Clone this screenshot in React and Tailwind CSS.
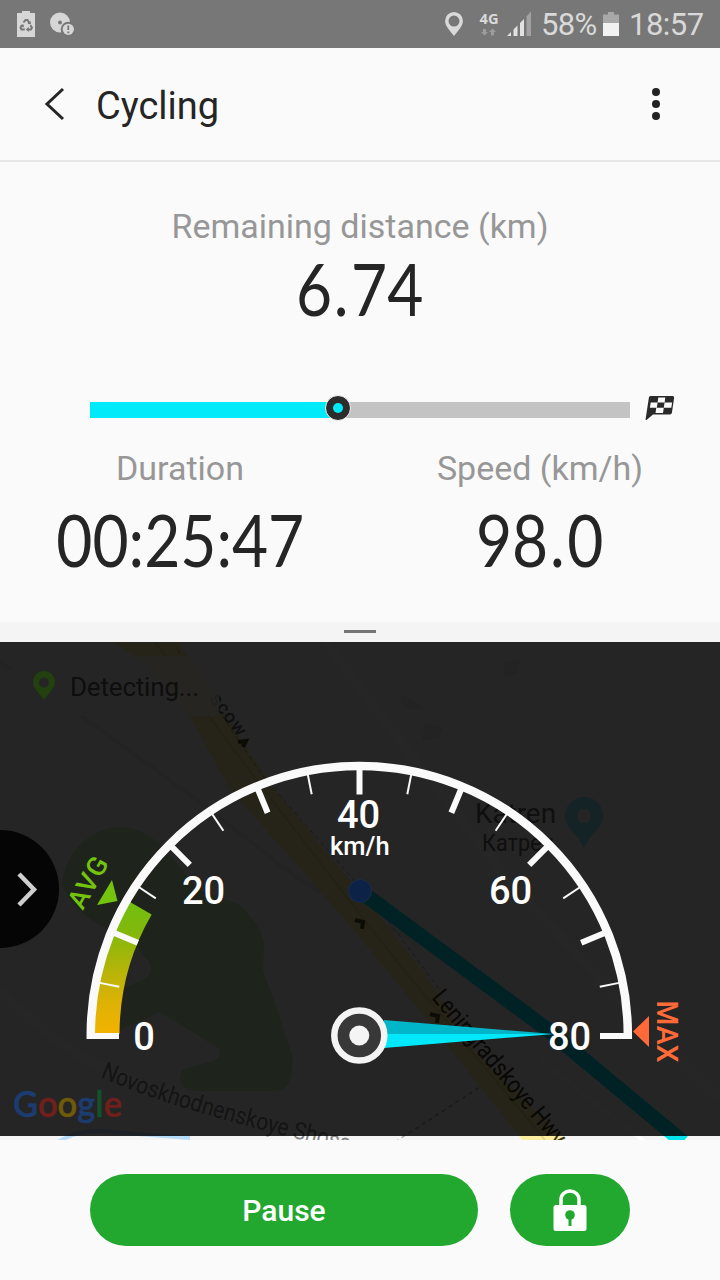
const CX = 359.5;
const CY = 1034.5;

const labels = [
  { value: "0", x: 144, y: 1050 },
  { value: "20", x: 203.5, y: 903.5 },
  { value: "40", x: 358.5, y: 828 },
  { value: "60", x: 510.5, y: 903.5 },
  { value: "80", x: 569.5, y: 1050 },
];

function polar(r, deg) {
  const a = (deg * Math.PI) / 180;
  return [CX - r * Math.cos(a), CY - r * Math.sin(a)];
}

function StatusBar() {
  return (
    <div className="flex h-12 items-center bg-[#777777] text-[#d9d9d9]">
      <svg className="ml-4 h-12 w-16 shrink-0" viewBox="16 0 64 48" fill="none">
        <path d="M17 13h5v-2h8v2h5v24H17z" fill="#d6d6d6" />
        <g stroke="#777" strokeWidth="2">
          <path d="M23.5 22.5 25.5 20h2l1.7 2.8M30.5 25.3l1.4 2.4-1 1.8h-3.2M24.8 29.5h-3.3l-.9-1.8 1.5-2.6" />
        </g>
        <path d="m27.5 24 3.6.2-.8-3.5zM28.8 27v5l-3-2.5zM20 25.5l3.5-1.3.7 3.3z" fill="#777" />
        <circle cx="60" cy="22.5" r="10" fill="#d6d6d6" />
        <circle cx="60" cy="22.5" r="2" fill="#777" />
        <circle cx="68.3" cy="29.3" r="7.6" fill="#777" />
        <circle cx="68.3" cy="29.3" r="5.6" fill="#d6d6d6" />
        <path d="M68.3 25.5v4.5M68.3 31.4v1.8" stroke="#777" strokeWidth="1.8" />
      </svg>
      <svg className="ml-auto h-12 w-[96px] shrink-0" viewBox="440 0 96 48">
        <path fillRule="evenodd" d="M454 12a8.9 8.9 0 0 1 8.9 8.9c0 5.2-5.4 10.3-8.9 15-3.5-4.7-8.9-9.8-8.9-15A8.9 8.9 0 0 1 454 12zm0 3.6a5.5 5.5 0 1 0 0 11 5.5 5.5 0 0 0 0-11z" fill="#d9d9d9" />
        <text x="479.5" y="24" textLength="19" lengthAdjust="spacingAndGlyphs" fontFamily="Noto Sans, sans-serif" fontWeight="700" fontSize="15" fill="#d9d9d9">4G</text>
        <path d="M483 29h3v3h2l-3.5 3.5-3.5-3.5h2zM491 35.5v-3.5h-2l3.5-3.5 3.5 3.5h-2v3.5z" fill="#9c9c9c" />
        <path d="M507 36l4-4v4zM513.5 29.5l4-4V36h-4zM520 23l4-4v17h-4z" fill="#e2e2e2" />
        <path d="M526.5 16.5l4.5-5V36h-4.5z" fill="#a2a2a2" />
      </svg>
      <span className="ml-[5px] w-[62px] shrink-0 pt-[2px] text-[31px] tracking-[-0.7px]">58%</span>
      <svg className="h-12 w-[16px] shrink-0" viewBox="603 0 16 48">
        <path d="M603 14.5h5V12h6v2.5h5V23h-16z" fill="#a8a8a8" />
        <path d="M603 23h16v13h-16z" fill="#f2f2f2" />
      </svg>
      <span className="ml-[10px] w-[91px] shrink-0 pt-[2px] text-[31px] tracking-[-0.5px]">18:57</span>
    </div>
  );
}

function Header() {
  return (
    <header className="flex h-[114px] items-center border-b-2 border-[#e6e6e6]">
      <svg className="ml-[42px] h-9 w-6" viewBox="0 0 24 36" fill="none">
        <path d="M21 3 5 18 21 33" stroke="#252525" strokeWidth="3" />
      </svg>
      <h1 className="ml-[30px] pt-[5px] text-[38px] text-[#252525]">Cycling</h1>
      <div className="mr-[60px] ml-auto flex flex-col gap-1">
        <i className="size-2 rounded-full bg-[#222]" />
        <i className="size-2 rounded-full bg-[#222]" />
        <i className="size-2 rounded-full bg-[#222]" />
      </div>
    </header>
  );
}

function Metric({ label, value, className }) {
  const [whole, fraction] = value.split(".");
  return (
    <div className={`flex flex-col items-center ${className}`}>
      <span className="text-[34px] leading-10 whitespace-nowrap text-[#979797]">{label}</span>
      <span className="scale-x-[0.865] font-['Lato',sans-serif] text-[72px] leading-[72px] whitespace-nowrap text-[#252525]">
        {whole}
        {fraction && <span className="pr-[3px] pl-[2px]">.</span>}
        {fraction}
      </span>
    </div>
  );
}

function Progress() {
  return (
    <div className="flex h-8 items-center pl-[90px]">
      <div className="relative h-4 w-[540px] bg-[#c3c3c3]">
        <div className="h-full bg-[#00eaf9]" style={{ width: `${(248 / 540) * 100}%` }} />
        <div className="absolute top-[-7px] left-[235px] grid size-[26px] place-items-center rounded-full border border-[#f5f5f5] bg-[#2c2c2c]">
          <div className="size-[10px] rounded-full bg-[#00eaf9]" />
        </div>
      </div>
      <svg className="mb-1 ml-[15px] h-7 w-8" viewBox="645 394 32 28">
        <path d="M650.5 396h22q2 0 1.600 2l-2.200 14.800q-.3 1.800-2 1.800H653l-6.500 5.400q-1 .3-.9-.8L648.900 397.500q.3-1.500 1.600-1.500z" fill="#2a2a2a" />
        <path d="M658.3 397.500h7l-.7 5.100h-7zM650.700 402.600h6.900l-.8 5.200h-6.900zM664.600 402.600h7.500l-.8 5.200h-7.500zM656.300 407.800h7.500l-.8 5.200h-7.500z" fill="#fafafa" />
      </svg>
    </div>
  );
}

function Ticks() {
  return Array.from({ length: 15 }, (_, i) => {
    const n = i + 1;
    const major = n % 2 === 0;
    const [x1, y1] = polar(266, n * 11.25);
    const [x2, y2] = polar(major ? 240 : 245, n * 11.25);
    return <line key={n} x1={x1} y1={y1} x2={x2} y2={y2} stroke="#fafafa" strokeWidth={major ? 6 : 2} />;
  });
}

function MapLayer() {
  return (
    <g>
      <rect y="642" width="720" height="498" fill="#f5f5f5" />
      <g fill="none" stroke="#fff" strokeWidth="9">
        <path d="M-10 655 L90 722 L190 795 L300 880 L420 945" strokeWidth="4" stroke="#e6e6e6" />
        <path d="M325 642 L415 760 L500 870 L600 980 L720 1100" />
        <path d="M0 990 Q60 1050 105 1068 Q200 1110 340 1145" />
        <path d="M540 1060 L645 1142" strokeWidth="4" />
      </g>
      <path d="M62 885 C65 850 92 827 122 827 C160 830 175 865 200 890 L240 905 L258 925 L264 942 L263 970 L278 1012 L292 1055 Q294 1072 288 1084 Q284 1091 272 1091 L195 1091 Q180 1089 180 1078 L182 1070 L215 1060 Q224 1054 218 1048 L160 1012 L120 1030 L124 988 L146 978 Q155 970 148 960 L132 943 L100 925 Q72 910 62 885z" fill="#cbecb8" />
      <path d="M113 642 H177 L197 667 L217 703 L275 790 L333 860 L395 935 L427 977 L473 1050 L565 1140 H522 L423 1015 L355 932 L325 897 L293 860 L230 790 L192 720 L150 667z" fill="#fdefa0" />
      <path d="M155 642 L230 745 L345 895 L400 965 L545 1140" fill="none" stroke="#e8d684" strokeWidth="2" />
      <path d="M178 650 L262 775 L380 910 L440 990" fill="none" stroke="#b5a85f" strokeWidth="1" strokeDasharray="4 4" />
      <path d="M395 1142 L480 1087" fill="none" stroke="#aaa" strokeWidth="1.5" strokeDasharray="4 4" />
      <path d="M55 1144 Q75 1130 100 1131 L190 1138" fill="none" stroke="#b5dcfb" strokeWidth="4" />
      <path d="M360 891 L548 1030 L683 1142" fill="none" stroke="#00e5ee" strokeWidth="15" />
      <path d="M402 695l12 5 8 8-10 2-12-7zM425 722l18 6-4 10-18 3zM503 662l18-2-4 14-12 2z" fill="#e6e6e6" />
      <g fontFamily="Roboto, sans-serif" fill="#686868">
        <text fontSize="19" fontWeight="500" transform="translate(209 699) rotate(53)" textLength="48">scow</text>
        <rect x="12" y="656" width="207" height="60" rx="2" fill="#fafafa" fillOpacity=".75" />
        <text x="70" y="696" fontSize="26" fill="#5c5c5c" textLength="129">Detecting...</text>
        <text x="475" y="823" fontSize="28" textLength="81" lengthAdjust="spacingAndGlyphs">Katren</text>
        <text x="482" y="851" fontSize="24" textLength="72" lengthAdjust="spacingAndGlyphs">Катрен</text>
        <text fontSize="24.5" fill="#3c3414" transform="translate(431 998) rotate(50)" textLength="194" lengthAdjust="spacingAndGlyphs">Leningradskoye Hwy</text>
        <text fontSize="24" fill="#858585">
          <textPath href="#shosse" textLength="271" lengthAdjust="spacingAndGlyphs">Novoskhodnenskoye Shosse</textPath>
        </text>
      </g>
      <path d="M238 742l8-1-3 6M355 920l8 2-1 7M430 1014l8 2-1 7" fill="none" stroke="#55502a" strokeWidth="4" />
    </g>
  );
}

function Gauge() {
  const [ox, oy] = polar(265.5, 30);
  const [ix, iy] = polar(240, 30);
  return (
    <g>
      <path d={`M${CX - 265.5} 1034 A265.5 265.5 0 0 1 ${ox} ${oy} L${ix} ${iy} A240 240 0 0 0 ${CX - 240} 1034z`} fill="url(#avg)" />
      <path d="M90.8 1039 V1034.5 A268.5 268.5 0 0 1 627.8 1034.5 V1039" fill="none" stroke="#fafafa" strokeWidth="8.5" />
      <path d="M90 1036H119M600 1036H631" stroke="#fafafa" strokeWidth="6" />
      <Ticks />
      <path d="M384 1020 L554 1034 H384z" fill="#00b6c8" />
      <path d="M384 1034 H554 L384 1048z" fill="#00e8fa" />
      <circle cx="359.3" cy="1035.5" r="25" fill="#383838" stroke="#f4f4f4" strokeWidth="6.5" />
      <circle cx="359.3" cy="1035.5" r="10" fill="#f4f4f4" />
      <g fontFamily="Roboto, sans-serif" fontWeight="500" fill="#fff" textAnchor="middle">
        {labels.map((l) => (
          <text key={l.value} x={l.x} y={l.y} fontSize="38">{l.value}</text>
        ))}
        <text x="359.8" y="854.5" fontSize="25.5">km/h</text>
        <text fontSize="27" fill="#74c40f" transform="translate(96 887) rotate(-61)" textLength="55">AVG</text>
        <text fontSize="30" fill="#ff6a38" transform="translate(657 1031.5) rotate(90)" textLength="62" lengthAdjust="spacingAndGlyphs">MAX</text>
      </g>
      <path d="M112 880 L117.5 901 L97 905z" fill="#74c40f" />
      <path d="M633 1031.5 L649 1016 V1047z" fill="#ff6a38" />
    </g>
  );
}

function MapPanel() {
  return (
    <svg className="block h-[498px] w-[720px]" viewBox="0 642 720 498">
      <defs>
        <linearGradient id="avg" gradientUnits="userSpaceOnUse" x1="0" y1="1033" x2="0" y2="905">
          <stop offset="0" stopColor="#f2b200" />
          <stop offset=".25" stopColor="#dcb205" />
          <stop offset=".8" stopColor="#82b80c" />
          <stop offset="1" stopColor="#72be10" />
        </linearGradient>
        <path id="shosse" d="M100 1077 C160 1103 220 1121 400 1164" />
      </defs>
      <MapLayer />
      <rect y="642" width="720" height="494" fill="#000" fillOpacity=".85" />

      <path fillRule="evenodd" d="M44 671a11 11 0 0 1 11 11c0 6-7 12-11 18-4-6-11-12-11-18a11 11 0 0 1 11-11zm0 6.5a5 5 0 1 0 0 10 5 5 0 0 0 0-10z" fill="#23400f" />
      <path d="M584 797a19 19 0 0 1 19 19c0 13-14 17-19 33-5-16-19-20-19-33a19 19 0 0 1 19-19z" fill="#142325" />
      <circle cx="584" cy="816" r="7" fill="#252525" />
      <circle cx="360" cy="891" r="11.5" fill="#0d2247" stroke="#1d2c48" />
      <text x="13" y="1117" fontSize="36" fontWeight="600" fontFamily="Lato, sans-serif" textLength="109" lengthAdjust="spacingAndGlyphs" strokeWidth=".5">
        <tspan fill="#1c3c70" stroke="#1c3c70">G</tspan>
        <tspan fill="#6f201c" stroke="#6f201c">o</tspan>
        <tspan fill="#6f5a09" stroke="#6f5a09">o</tspan>
        <tspan fill="#1c3c70" stroke="#1c3c70">g</tspan>
        <tspan fill="#14502a" stroke="#14502a">l</tspan>
        <tspan fill="#6f201c" stroke="#6f201c">e</tspan>
      </text>

      <circle cx="0" cy="889" r="59" fill="#050505" />
      <path d="M19 874 L34 889.5 L19 905" fill="none" stroke="#cfcfcf" strokeWidth="4.5" />
      <Gauge />
    </svg>
  );
}

function Controls() {
  return (
    <div className="flex h-[140px] gap-8 px-[90px] pt-[34px]">
      <button className="h-[72px] w-[388px] rounded-full bg-[#22a82f] text-[30px] font-medium text-white">Pause</button>
      <button className="grid h-[72px] w-[120px] place-items-center rounded-full bg-[#22a82f]">
        <svg className="h-[42px] w-[34px]" viewBox="553 1189 34 42" fill="none">
          <path d="M561 1206v-6.5a9 8.5 0 0 1 18 0v6.5" stroke="#fff" strokeWidth="3.5" />
          <rect x="553.5" y="1205" width="33" height="26" rx="2.5" fill="#fff" />
          <circle cx="570" cy="1215" r="4.8" fill="#22a82f" />
          <path d="M568.5 1217h3v9h-3z" fill="#22a82f" />
        </svg>
      </button>
    </div>
  );
}

export default function App() {
  return (
    <div className="h-[1280px] w-[720px] overflow-hidden bg-[#fafafa] font-['Roboto',sans-serif]">
      <StatusBar />
      <Header />
      <section className="h-[460px]">
        <Metric label="Remaining distance (km)" value="6.74" className="gap-[6px] pt-[44px]" />
        <div className="mt-[70px]">
          <Progress />
        </div>
        <div className="mt-[22px] grid grid-cols-2">
          <Metric label="Duration" value="00:25:47" className="gap-[15px]" />
          <Metric label="Speed (km/h)" value="98.0" className="gap-[15px]" />
        </div>
      </section>
      <div className="flex h-5 justify-center bg-[#f4f4f4] pt-2">
        <div className="h-[3px] w-8 bg-[#757575]" />
      </div>
      <MapPanel />
      <Controls />
    </div>
  );
}
